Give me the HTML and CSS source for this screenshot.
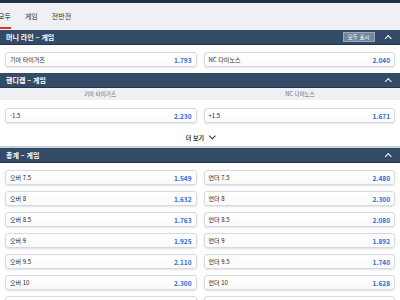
FILE: index.html
```html
<!doctype html>
<html lang="ko">
<head>
    <meta charset="utf-8" />
    <title>경기 배당</title>
    <link rel="stylesheet" href="styles.css">
</head>
<body>
    <div class="top-strip"></div>

    <div class="tabs">
        <span class="tab active">모두</span>
        <span class="tab">게임</span>
        <span class="tab">전반전</span>
    </div>

    <!-- 머니 라인 -->
    <div class="market-head">
        <span class="market-title">머니 라인 – 게임</span>
        <span class="show-all">모두 표시</span>
        <span class="chev-up"></span>
    </div>
    <div class="market-body">
        <div class="odds-grid">
            <div class="odd"><span>기아 타이거즈</span><b>1.793</b></div>
            <div class="odd"><span>NC 다이노스</span><b>2.040</b></div>
        </div>
    </div>

    <!-- 핸디캡 -->
    <div class="market-head">
        <span class="market-title">핸디캡 – 게임</span>
        <span class="chev-up"></span>
    </div>
    <div class="team-row">
        <span>기아 타이거즈</span>
        <span>NC 다이노스</span>
    </div>
    <div class="market-body handicap">
        <div class="odds-grid">
            <div class="odd"><span>-1.5</span><b>2.230</b></div>
            <div class="odd"><span>+1.5</span><b>1.671</b></div>
        </div>
    </div>
    <div class="more">더 보기 <span class="chev-down"></span></div>

    <!-- 총계 -->
    <div class="market-head">
        <span class="market-title">총계 – 게임</span>
        <span class="chev-up"></span>
    </div>
    <div class="market-body">
        <div class="odds-grid">
            <div class="odd"><span>오버 7.5</span><b>1.549</b></div>
            <div class="odd"><span>언더 7.5</span><b>2.480</b></div>
            <div class="odd"><span>오버 8</span><b>1.632</b></div>
            <div class="odd"><span>언더 8</span><b>2.300</b></div>
            <div class="odd"><span>오버 8.5</span><b>1.763</b></div>
            <div class="odd"><span>언더 8.5</span><b>2.080</b></div>
            <div class="odd"><span>오버 9</span><b>1.925</b></div>
            <div class="odd"><span>언더 9</span><b>1.892</b></div>
            <div class="odd"><span>오버 9.5</span><b>2.110</b></div>
            <div class="odd"><span>언더 9.5</span><b>1.740</b></div>
            <div class="odd"><span>오버 10</span><b>2.300</b></div>
            <div class="odd"><span>언더 10</span><b>1.628</b></div>
            <div class="odd"></div>
            <div class="odd"></div>
        </div>
    </div>
</body>
</html>
```

FILE: styles.css
```css
body {
    margin: 0;
    background-color: #ffffff;
    font-family: "Noto Sans CJK KR", "Noto Sans", sans-serif;
    font-size: 6.5px;
    color: #222;
    height: 300px;
    overflow: hidden;
}

.top-strip {
    height: 3px;
    background-color: #1f3049;
}

.tabs {
    height: 27px;
    background-color: #eef0f4;
    display: flex;
    gap: 14px;
    margin-left: -2px;
}

.tab {
    font-size: 7px;
    line-height: 26px;
    color: #333;
    height: 24px;
}

.tab.active {
    color: #111;
    border-bottom: 2px solid #e0322b;
}

.market-head {
    height: 14px;
    background-color: #334b67;
    border-bottom: 1px solid #233650;
    display: flex;
    align-items: center;
    padding: 0 6px;
}

.market-title {
    flex: 1;
    color: #fff;
    font-weight: bold;
    font-size: 7px;
}

.show-all {
    background-color: #74869b;
    border: 1px solid #9aa8b8;
    color: #fff;
    font-size: 5.5px;
    line-height: 8px;
    padding: 0 4px;
    margin-right: 11px;
}

.chev-up,
.chev-down {
    display: inline-block;
    width: 3.5px;
    height: 3.5px;
    border-left: 1.5px solid #fff;
    border-top: 1.5px solid #fff;
    transform: rotate(45deg);
    margin: 2px 4px 0 0;
}

.chev-down {
    border-color: #333;
    transform: rotate(225deg);
    margin: 0 0 2px 4px;
}

.market-body {
    padding: 7px 5px 6px;
}

.odds-grid {
    display: grid;
    grid-template-columns: 1fr 1fr;
    column-gap: 7px;
    row-gap: 6px;
}

.odd {
    height: 15px;
    border: 1px solid #d6dae0;
    border-radius: 3px;
    box-shadow: 0 1px 2px rgba(0, 0, 0, 0.12);
    background: linear-gradient(#fff, #fafafa);
    display: flex;
    align-items: center;
    justify-content: space-between;
    padding: 0 4px;
    box-sizing: border-box;
}

.odd span {
    font-size: 6px;
    color: #222;
}

.odd b {
    font-size: 6.5px;
    color: #1e6fe0;
}

.team-row {
    height: 12px;
    background-color: #eef0f4;
    display: grid;
    grid-template-columns: 1fr 1fr;
    text-align: center;
    line-height: 12px;
    font-size: 5.5px;
    color: #666;
    margin-bottom: 1px;
}

.handicap {
    padding-top: 7px;
    padding-bottom: 0;
}

.more {
    height: 23px;
    line-height: 30px;
    text-align: center;
    font-size: 6px;
    font-weight: bold;
    color: #333;
    border-bottom: 2px solid #c9d0d9;
    overflow: hidden;
}
```
